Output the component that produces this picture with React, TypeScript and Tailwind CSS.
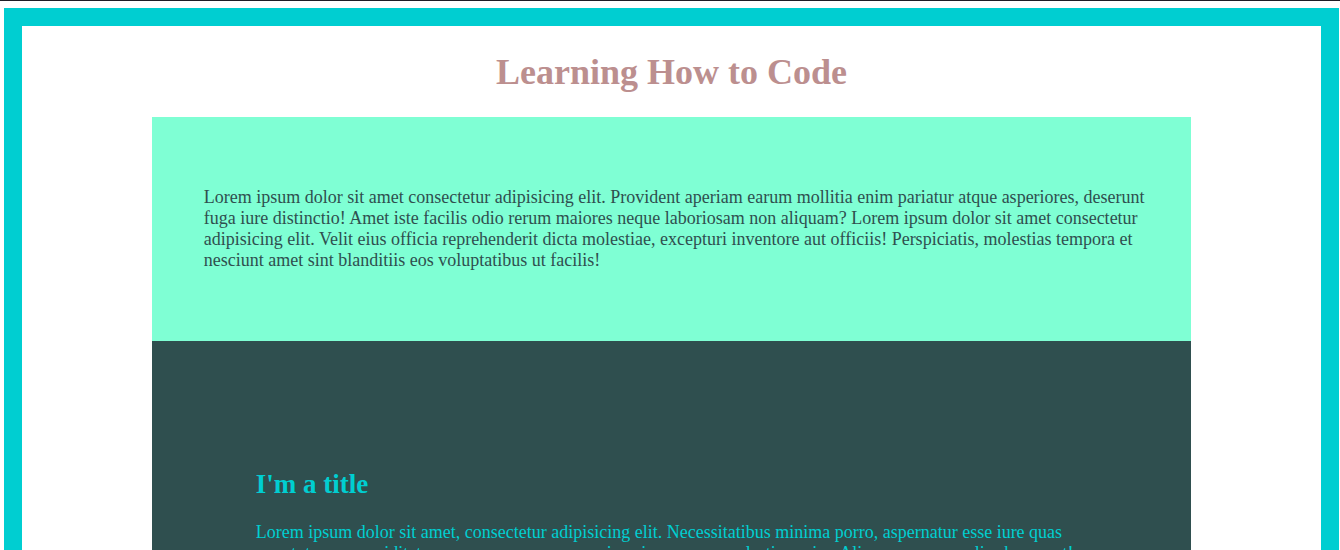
export default function App() {
  return (
    <div className="h-screen overflow-hidden border-t border-[#1e1e26] bg-white pt-[7px] pr-px pl-1 font-['Liberation_Serif',serif] text-lg leading-[21px]">
      <main className="border-[18px] border-[#00ced1] pt-[26px]">
        <h1 className="mb-6 text-center text-4xl leading-[41px] font-bold text-[#bc8f8f]">Learning How to Code</h1>
        <div className="mx-auto w-4/5">
          <section className="bg-[#7fffd4] py-[70px] pr-[4%] pl-[5%] text-[#2f4f4f]">
            <p>
              Lorem ipsum dolor sit amet consectetur adipisicing elit. Provident aperiam earum mollitia enim pariatur
              atque asperiores, deserunt fuga iure distinctio! Amet iste facilis odio rerum maiores neque laboriosam non
              aliquam? Lorem ipsum dolor sit amet consectetur adipisicing elit. Velit eius officia reprehenderit dicta
              molestiae, excepturi inventore aut officiis! Perspiciatis, molestias tempora et nesciunt amet sint
              blanditiis eos voluptatibus ut facilis!
            </p>
          </section>
          <section className="bg-[#2f4f4f] px-[10%] py-32 text-[#00ced1]">
            <h2 className="mb-[22px] text-[27px] leading-[31px] font-bold">I'm a title</h2>
            <p>
              Lorem ipsum dolor sit amet, consectetur adipisicing elit. Necessitatibus minima porro, aspernatur esse
              iure quas eum totam ex cupiditate numquam earum corporis quia eum eos molestias enim. Aliquam quos ex alias
              harum at!
            </p>
          </section>
        </div>
      </main>
    </div>
  );
}
